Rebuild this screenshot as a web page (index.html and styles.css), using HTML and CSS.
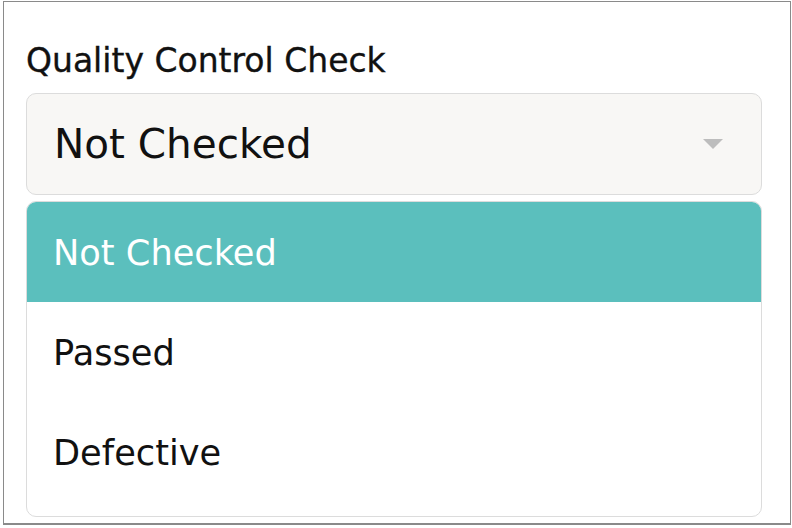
FILE: index.html
```html
<!DOCTYPE html>
<html lang="en">
<head>
<meta charset="utf-8">
<title>Quality Control Check</title>
<link rel="stylesheet" href="styles.css">
</head>
<body>
<div class="frame">
  <div class="field">
    <label class="label">Quality Control Check</label>
    <div class="select">
      <span class="select-value">Not Checked</span>
      <svg class="caret" width="20" height="10" viewBox="0 0 20 10" aria-hidden="true"><polygon points="0,0 20,0 10,10" fill="#bdbdbd"/></svg>
    </div>
    <ul class="menu">
      <li class="option option-active">Not Checked</li>
      <li class="option">Passed</li>
      <li class="option">Defective</li>
    </ul>
  </div>
</div>
</body>
</html>
```
FILE: styles.css
```css
html, body {
  margin: 0;
  padding: 0;
  background: #ffffff;
}
body {
  font-family: "DejaVu Sans", "Liberation Sans", sans-serif;
  color: #111111;
}
.frame {
  box-sizing: border-box;
  margin: 1px 0 0 3px;
  width: 788px;
  height: 524px;
  border-style: solid;
  border-color: #8a8a8a;
  border-width: 1px 1px 2px 1px;
  padding: 39px 0 0 22px;
}
.field {
  width: 736px;
  display: flex;
  flex-direction: column;
}
.label {
  display: block;
  font-size: 33px;
  line-height: 40px;
  margin-bottom: 12px;
  color: #111;
  -webkit-text-stroke: 0.35px #111;
}
.select {
  box-sizing: border-box;
  height: 102px;
  border: 1px solid #dcdcdc;
  border-radius: 10px;
  background: #f8f7f5;
  display: flex;
  align-items: center;
  justify-content: space-between;
  padding: 0 38px 0 27px;
}
.select-value {
  font-size: 40.5px;
  line-height: 48px;
}
.caret {
  display: block;
}
.menu {
  list-style: none;
  margin: 6px 0 0 0;
  padding: 0 0 14px 0;
  border: 1px solid #dcdcdc;
  border-radius: 10px;
  overflow: hidden;
  background: #fff;
}
.option {
  height: 100px;
  display: flex;
  align-items: center;
  padding-left: 26px;
  font-size: 35.2px;
}
.option-active {
  background: #5bbfbd;
  color: #ffffff;
}
```
